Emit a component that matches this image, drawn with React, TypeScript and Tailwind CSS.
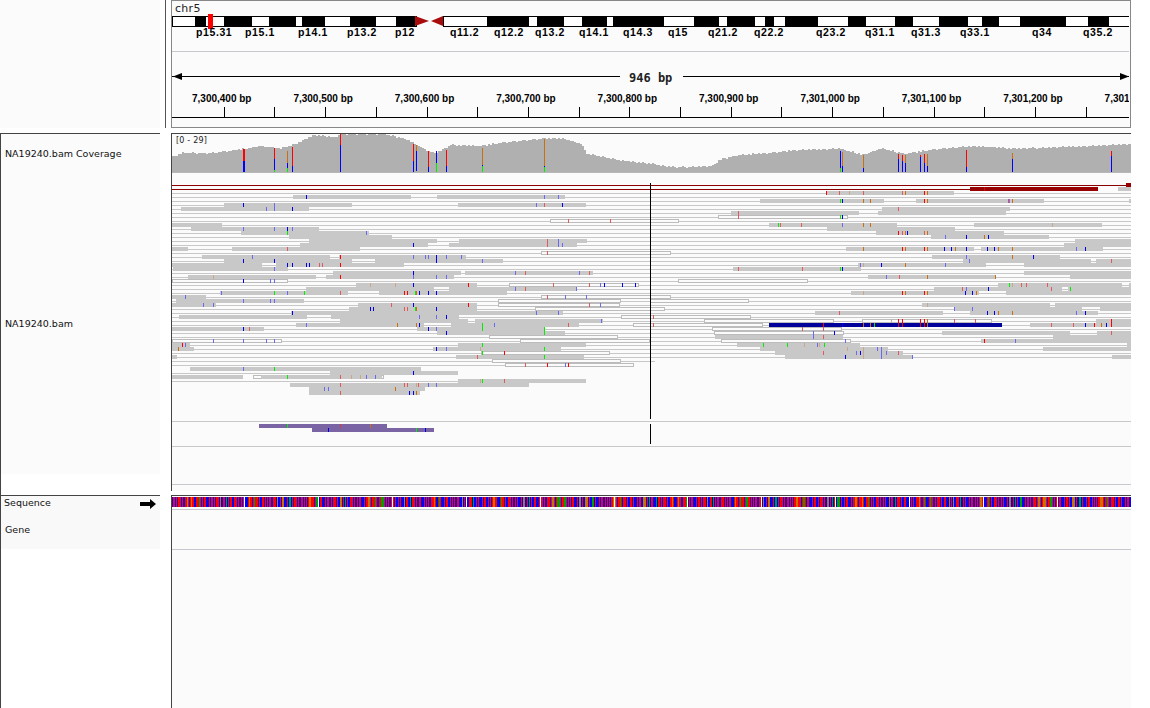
// IGV style genome browser view
type Read = [number, number[][], number[][], [number, string][]]

const markColor: Record<string, string> = {
  b: "#0000f0",
  B: "#6a6af0",
  r: "#ff0000",
  R: "#e05a5a",
  g: "#00ee00",
  o: "#c87010",
  t: "#c8a888",
}

// row, filled blocks, outlined blocks, mismatches, x values taken 3x from the left half
const leftReads: Read[] = [
  [3, [[369, 723], [801, 1185]], [], [[409, "b"], [1123, "B"], [1165, "B"]]],
  [5, [[162, 546], [864, 1248]], [], [[220, "b"], [313, "B"], [1099, "B"], [1123, "R"], [1177, "b"]]],
  [6, [[33, 417]], [], [[289, "B"], [313, "B"], [367, "b"]]],
  [9, [], [[1141, 1470]], [[1195, "R"], [1321, "R"]]],
  [10, [[5, 156]], [], []],
  [11, [[63, 447]], [], [[220, "B"], [313, "B"], [352, "b"], [367, "B"]]],
  [12, [[213, 597]], [], [[352, "g"], [589, "B"]]],
  [13, [[357, 666]], [], []],
  [14, [[417, 801], [867, 1251]], [], [[1132, "R"], [1165, "B"]]],
  [15, [[390, 774], [837, 1221]], [], [[730, "b"], [1132, "R"], [1165, "B"], [1177, "B"]]],
  [16, [[5, 54], [186, 570]], [], [[352, "R"]]],
  [17, [], [[1114, 1470]], [[1132, "R"]]],
  [18, [[96, 480], [507, 888]], [], [[247, "B"], [511, "r"], [730, "B"], [766, "B"], [775, "B"], [799, "b"], [829, "B"], [874, "B"]]],
  [19, [[162, 546], [615, 999]], [], [[220, "b"], [313, "b"], [799, "b"], [937, "B"]]],
  [20, [[5, 276], [318, 702]], [], [[352, "b"], [367, "b"], [409, "b"], [418, "b"], [448, "R"], [457, "R"], [511, "r"]]],
  [21, [[9, 354]], [], [[313, "B"]]],
  [22, [[489, 873], [885, 1269]], [], [[730, "b"], [1036, "B"], [1066, "R"], [1228, "B"], [1258, "R"]]],
  [23, [[54, 438], [468, 852]], [], [[130, "t"], [511, "r"], [730, "B"], [799, "B"], [829, "B"]]],
  [24, [], [[5, 351]], [[220, "b"], [301, "B"], [313, "B"]]],
  [25, [[558, 921]], [[1018, 1404]], [[601, "t"], [676, "t"], [730, "b"], [895, "r"], [1150, "R"], [1258, "R"], [1291, "B"], [1303, "b"], [1357, "b"], [1396, "b"]]],
  [26, [[408, 792], [837, 1221]], [], [[1036, "B"], [1066, "R"], [1219, "B"]]],
  [27, [[150, 534], [627, 1011]], [], [[154, "B"], [313, "g"], [352, "B"], [403, "g"], [511, "R"], [703, "r"], [712, "r"], [736, "g"], [739, "o"], [748, "b"], [775, "b"], [799, "b"]]],
  [28, [[5, 108]], [[1114, 1470]], [[46, "B"], [1132, "R"], [1186, "B"], [1249, "B"]]],
  [29, [[18, 402]], [[985, 1350]], [[220, "B"], [301, "B"], [313, "B"]]],
  [30, [[5, 138], [564, 921]], [[985, 1347]], [[100, "B"], [130, "B"], [664, "R"], [730, "b"], [895, "r"], [1258, "R"], [1291, "B"]]],
  [31, [[537, 921]], [[1096, 1470]], [[601, "b"], [610, "b"], [703, "R"], [712, "R"], [736, "g"], [739, "o"], [799, "b"]]],
  [32, [[363, 1179]], [], [[367, "b"], [1099, "B"], [1165, "B"]]],
  [33, [[27, 411], [483, 867]], [[1354, 1470]], [[748, "B"], [799, "B"], [829, "b"], [1450, "R"]]],
  [34, [[510, 894], [915, 1299]], [], [[1294, "B"]]],
  [35, [[378, 762], [843, 1227]], [[1390, 1470]], [[409, "B"], [682, "o"], [739, "o"], [748, "b"], [937, "g"], [973, "B"], [1195, "R"], [1450, "R"]]],
  [36, [[5, 282], [741, 1125]], [], [[220, "b"], [238, "R"], [775, "b"], [799, "B"], [937, "g"], [1123, "g"]]],
  [37, [[801, 1185]], [], [[829, "b"], [1123, "g"]]],
  [38, [], [[958, 1342]], []],
  [39, [], [[5, 333], [1051, 1436]], [[130, "B"], [220, "B"], [289, "B"], [313, "B"]]],
  [40, [[5, 60], [864, 1248]], [], [[37, "r"], [46, "B"], [937, "g"]]],
  [41, [[5, 72], [789, 1173]], [], [[25, "o"], [799, "b"], [829, "B"], [931, "t"], [1123, "g"]]],
  [42, [], [[934, 1318]], [[937, "g"], [1003, "r"]]],
  [43, [[5, 21], [858, 1242]], [], [[922, "R"], [1123, "g"]]],
  [44, [], [[967, 1351]], []],
  [45, [], [[1006, 1390]], [[1066, "R"], [1132, "r"], [1186, "B"], [1195, "r"]]],
  [46, [[60, 753]], [], [[220, "B"], [313, "g"]]],
  [47, [[480, 864]], [], [[730, "b"]]],
  [48, [[5, 219], [273, 636]], [[250, 639]], [[352, "g"], [511, "R"], [544, "t"], [571, "t"], [589, "B"], [616, "B"]]],
  [49, [[864, 1248]], [], [[931, "t"], [937, "g"], [1003, "R"]]],
  [50, [[360, 1077]], [], [[511, "R"], [703, "R"], [712, "R"], [739, "t"], [745, "R"], [775, "B"], [799, "B"]]],
  [51, [[417, 765]], [], [[463, "B"], [475, "B"], [676, "o"]]],
  [52, [[417, 750]], [], [[511, "R"], [718, "b"], [730, "b"], [739, "o"]]],
]

// same, right half
const rightReads: Read[] = [
  [2, [[530, 912]], [], [[529, "r"], [568, "R"], [598, "t"], [640, "R"], [757, "R"], [766, "o"], [823, "r"], [832, "o"]]],
  [4, [[330, 702], [798, 1182], [1437, 1443]], [], [[571, "g"], [577, "b"], [640, "o"], [661, "o"], [823, "r"], [832, "o"], [1075, "B"], [1078, "R"], [1087, "o"]]],
  [6, [[696, 1080]], [], [[745, "R"]]],
  [7, [[243, 627], [684, 1068]], [], [[265, "R"]]],
  [8, [], [[205, 590]], [[265, "R"], [571, "g"], [577, "b"]]],
  [9, [], [[0, 85]], []],
  [10, [[357, 741], [972, 1356]], [], [[385, "g"], [391, "R"], [454, "R"], [577, "B"], [640, "o"], [661, "o"], [1207, "t"]]],
  [11, [[531, 915]], [], []],
  [12, [[678, 1062]], [], [[745, "r"], [757, "R"], [766, "o"], [772, "b"], [823, "R"], [832, "o"]]],
  [13, [[843, 1197]], [], [[886, "B"], [949, "b"], [1003, "o"], [1015, "b"]]],
  [14, [[1275, 1443]], [], []],
  [15, [[1242, 1443]], [], []],
  [16, [[588, 972], [993, 1359]], [], [[640, "o"], [757, "r"], [766, "o"], [823, "r"], [832, "o"], [883, "b"], [904, "b"], [916, "o"], [949, "b"], [1012, "b"], [1033, "b"], [1045, "o"], [1087, "o"], [1279, "B"], [1306, "b"]]],
  [17, [], [[0, 59]], []],
  [18, [[846, 1230]], [], [[949, "B"], [1087, "o"], [1150, "b"]]],
  [19, [[939, 1323], [1338, 1443]], [], [[958, "B"], [1384, "R"]]],
  [20, [[624, 1008], [1122, 1443]], [], [[631, "B"], [640, "t"], [694, "b"], [766, "o"], [886, "B"]]],
  [21, [[249, 633]], [], [[265, "R"], [457, "R"], [571, "g"], [577, "b"]]],
  [22, [[1122, 1443]], [], []],
  [23, [[654, 1038], [1260, 1443]], [], [[709, "B"], [748, "R"], [832, "o"], [1036, "o"]]],
  [24, [], [[85, 470]], []],
  [25, [[1044, 1416], [1437, 1443]], [], [[1078, "g"], [1087, "t"], [1114, "R"], [1129, "R"], [1192, "R"]]],
  [26, [[852, 1236], [1254, 1443]], [], [[937, "R"], [949, "B"], [1015, "b"], [1204, "R"], [1261, "g"]]],
  [27, [[603, 987], [1068, 1443]], [], [[640, "t"], [757, "r"], [766, "o"], [823, "r"], [832, "o"], [946, "b"], [967, "b"], [979, "o"]]],
  [28, [], [[0, 59]], []],
  [29, [], [[0, 293]], []],
  [30, [[816, 1200], [1215, 1443]], [], [[832, "t"]]],
  [31, [[912, 1296], [1350, 1443]], [[0, 41]], [[913, "B"], [967, "B"]]],
  [32, [[495, 879], [960, 1344]], [], [[568, "R"], [1012, "b"], [1033, "b"], [1045, "o"], [1087, "o"], [1279, "B"], [1306, "b"]]],
  [33, [], [[8, 299]], [[10, "R"]]],
  [34, [[1338, 1443]], [[163, 548], [637, 1022]], [[724, "t"], [745, "r"], [757, "r"], [811, "r"], [823, "r"], [832, "o"], [913, "R"], [976, "R"], [1384, "r"]]],
  [35, [[1140, 1443]], [[8, 335]], [[10, "R"], [1204, "R"], [1270, "R"], [1306, "b"], [1333, "r"], [1354, "o"], [1369, "b"], [1384, "r"]]],
  [36, [], [[187, 574]], [[457, "R"], [520, "R"]]],
  [37, [[876, 1260], [1341, 1443]], [[193, 578]], [[490, "B"], [553, "b"], [1384, "R"]]],
  [38, [[195, 578], [1209, 1443]], [], [[490, "B"], [520, "R"]]],
  [39, [[993, 1377], [1209, 1443]], [[214, 599]], [[586, "B"], [1003, "r"], [1096, "B"]]],
  [40, [[261, 630], [1431, 1443]], [], [[340, "g"], [412, "g"], [463, "t"], [502, "B"], [508, "t"], [523, "g"]]],
  [41, [[330, 714], [1179, 1443]], [], [[592, "t"], [640, "t"], [682, "B"], [694, "B"]]],
  [42, [[375, 759]], [], [[520, "R"], [619, "B"], [631, "b"], [640, "t"], [694, "B"], [709, "B"], [745, "R"]]],
  [43, [[405, 789], [1386, 1443]], [], [[586, "b"], [640, "t"], [694, "B"], [787, "B"]]],
]

const navyMarks: [number, string][] = [[520, "r"], [577, "b"], [640, "o"], [661, "o"], [673, "g"], [745, "r"], [757, "r"], [811, "r"], [823, "r"], [832, "o"]]

// top of the coverage area per x, from the left and the right crop
const coverageLeft = [[465, 470], [490, 458], [560, 460], [650, 448], [700, 438], [760, 445], [800, 430], [845, 405], [900, 412], [920, 402], [1040, 402], [1100, 420], [1150, 450], [1175, 460], [1215, 435], [1300, 438], [1350, 428], [1470, 415], [1520, 415], [1568, 432]]
const coverageRight = [[45, 462], [130, 480], [210, 490], [280, 502], [385, 498], [400, 480], [450, 466], [540, 458], [610, 450], [730, 446], [790, 465], [840, 444], [900, 462], [980, 448], [1090, 438], [1180, 445], [1230, 445], [1400, 438], [1510, 432]]

const coveragePoints = [
  ...coverageLeft.map(([x, y]) => [x / 2.703, y / 3]),
  ...coverageRight.map(([x, y]) => [570 + x / 2.703, y / 3]),
]

function coverageTop(x: number) {
  for (let i = 1; i < coveragePoints.length; i++) {
    const [x1, y1] = coveragePoints[i]
    if (x <= x1) {
      const [x0, y0] = coveragePoints[i - 1]
      return y0 + ((y1 - y0) * (x - x0)) / (x1 - x0)
    }
  }
  return 144
}

const coverageSteps = Array.from({ length: 480 }, (_, i) => {
  const x = 172 + i * 2
  const wobble = ((i * 7) % 5) * 0.3 - 0.6
  return { x, y: Math.round(coverageTop(x) + wobble) }
})

const RED = "#ff0000"
const BLUE = "#0000ff"
const GREEN = "#00ee00"
const AMBER = "#c87010"

// x, then [colour, top, bottom] in crop pixels
const coverageBars: [number, [string, number, number][]][] = [
  [659 / 2.703, [[RED, 448, 483], [BLUE, 483, 516]]],
  [742 / 2.703, [[RED, 445, 478], [BLUE, 478, 510], [GREEN, 510, 516]]],
  [777 / 2.703, [[AMBER, 452, 490], [BLUE, 490, 503], [GREEN, 503, 516]]],
  [790 / 2.703, [[RED, 440, 498], [BLUE, 498, 516]]],
  [920 / 2.703, [[RED, 402, 435], [BLUE, 435, 516]]],
  [1118 / 2.703, [[RED, 432, 483], [BLUE, 483, 516]]],
  [1125 / 2.703, [[AMBER, 435, 453], [BLUE, 453, 513]]],
  [1158 / 2.703, [[RED, 452, 500], [BLUE, 500, 516]]],
  [1180 / 2.703, [[BLUE, 452, 490], [GREEN, 490, 516]]],
  [1207 / 2.703, [[RED, 450, 498], [BLUE, 498, 516]]],
  [1304 / 2.703, [[AMBER, 445, 495], [BLUE, 495, 498], [GREEN, 498, 516]]],
  [1472 / 2.703, [[AMBER, 416, 498], [BLUE, 498, 501], [GREEN, 501, 516]]],
  [570 + 731 / 2.703, [[BLUE, 452, 503], [GREEN, 503, 516]]],
  [570 + 737 / 2.703, [[AMBER, 457, 498], [BLUE, 498, 516]]],
  [570 + 793 / 2.703, [[AMBER, 465, 503], [BLUE, 503, 516]]],
  [570 + 887 / 2.703, [[RED, 462, 478], [BLUE, 478, 516]]],
  [570 + 898 / 2.703, [[RED, 465, 483], [BLUE, 483, 516]]],
  [570 + 906 / 2.703, [[AMBER, 465, 488], [BLUE, 488, 516]]],
  [570 + 947 / 2.703, [[RED, 465, 470], [BLUE, 470, 516]]],
  [570 + 958 / 2.703, [[RED, 462, 490], [BLUE, 490, 516]]],
  [570 + 966 / 2.703, [[AMBER, 462, 497], [BLUE, 497, 516]]],
  [570 + 1071 / 2.703, [[RED, 450, 500], [BLUE, 500, 516]]],
  [570 + 1195 / 2.703, [[AMBER, 460, 477], [BLUE, 477, 516]]],
  [570 + 1463 / 2.703, [[RED, 452, 467], [BLUE, 467, 516]]],
]

const blackBands = [
  [195, 206], [224, 252], [269, 296], [302, 325], [350, 376], [396, 415],
  [487, 529], [537, 564],
]
const blackBandsRight = [
  [33, 100], [116, 254], [335, 403], [425, 500], [527, 552], [580, 669], [752, 800], [879, 927], [998, 1076], [1114, 1160], [1217, 1340], [1400, 1457],
].map(([a, b]) => [570 + a / 2.703, 570 + b / 2.703])

const bandLabels: [string, number][] = [
  ["p15.31", 196], ["p15.1", 245], ["p14.1", 298], ["p13.2", 347], ["p12", 395], ["q11.2", 450], ["q12.2", 494], ["q13.2", 535], ["q14.1", 579], ["q14.3", 623], ["q15", 668], ["q21.2", 708], ["q22.2", 754], ["q23.2", 816], ["q31.1", 865], ["q31.3", 911], ["q33.1", 960], ["q34", 1032], ["q35.2", 1083],
]

const rulerLabels = ["7,300,400 bp", "7,300,500 bp", "7,300,600 bp", "7,300,700 bp", "7,300,800 bp", "7,300,900 bp", "7,301,000 bp", "7,301,100 bp", "7,301,200 bp", "7,301"]

// one base per pixel, blue and red in turn with some green and amber, breaks every ~74 px
const seqBreaks = [244, 318, 392, 466, 540, 614, 687, 761, 835, 909, 983, 1057]
const seqRuns: { x: number; w: number; c: string }[] = []
for (let x = 172, i = 1; x < 1131; i++) {
  const n = (i * 2654435761) >>> 7
  const w = Math.min([1, 2, 1, 1, 3, 1, 2, 1][n % 8], 1131 - x)
  const odd = (n >>> 6) % 16
  const c = odd === 0 ? "#00a000" : odd === 1 ? "#c87000" : i % 2 ? "#0000ff" : "#ff0000"
  seqRuns.push({ x, w, c })
  x += w
}

function ReadRows({ reads, offset }: { reads: Read[]; offset: number }) {
  return (
    <>
      {reads.map(([row, blocks, outlines, marks]) => {
        const y = 183 + row * 4
        return (
          <g key={row}>
            {outlines.map(([a, b]) => (
              <rect key={a} x={offset + a / 3 + 0.5} y={y + 0.5} width={(b - a) / 3} height={3} fill="#fbfbfb" stroke="#bcbcbc" />
            ))}
            {blocks.map(([a, b]) => (
              <rect key={a} x={offset + a / 3} y={y} width={(b - a) / 3} height={4} fill="#c8c8c8" />
            ))}
            {marks.map(([x, c]) => (
              <rect key={x} x={Math.round(offset + x / 3)} y={y} width={1} height={4} fill={markColor[c]} />
            ))}
          </g>
        )
      })}
    </>
  )
}

function ReadsTrack() {
  const lineEnds: Record<number, number> = { 44: 655, 45: 505, 46: 172, 47: 330, 48: 172, 49: 458 }
  return (
    <svg viewBox="172 174 959 317" width={959} height={317} shapeRendering="crispEdges" className="block">
      {Array.from({ length: 48 }, (_, i) => i + 2).map((row) => (
        <rect key={row} x={172} y={185 + row * 4} width={(lineEnds[row] ?? 1131) - 172} height={1} fill="#c8c8c8" />
      ))}
      <rect x={172} y={185} width={959} height={1} fill="#8b0000" />
      <rect x={172} y={189} width={798} height={1} fill="#8b0000" />
      <rect x={970} y={187} width={128} height={4} fill="#960000" />
      <rect x={984} y={187} width={1} height={4} fill="#e00000" />
      <rect x={1126} y={183} width={5} height={4} fill="#960000" />
      <rect x={1118} y={187} width={13} height={4} fill="#c8c8c8" />
      <ReadRows reads={leftReads} offset={170} />
      <ReadRows reads={rightReads} offset={650} />
      <rect x={769} y={323} width={233} height={4} fill="#00009a" />
      {navyMarks.map(([x, c]) => (
        <rect key={x} x={Math.round(650 + x / 3)} y={323} width={1} height={4} fill={markColor[c]} />
      ))}
      <rect x={650} y={183} width={1} height={236} fill="#000000" />
      <rect x={172} y={421} width={959} height={1} fill="#c8c8c8" />
      <rect x={259} y={424} width={128} height={4} fill="#7a64a4" />
      <rect x={312} y={428} width={122} height={4} fill="#7a64a4" />
      <rect x={287} y={424} width={1} height={4} fill="#00ee00" />
      <rect x={340} y={424} width={1} height={4} fill="#d04040" />
      <rect x={370} y={424} width={1} height={4} fill="#c87010" />
      <rect x={328} y={428} width={1} height={4} fill="#0000f0" />
      <rect x={416} y={428} width={1} height={4} fill="#00ee00" />
      <rect x={425} y={428} width={1} height={4} fill="#0000f0" />
      <rect x={650} y={424} width={1} height={20} fill="#000000" />
      <rect x={172} y={446} width={959} height={1} fill="#c8c8c8" />
      <rect x={172} y={484} width={959} height={1} fill="#c8c8d0" />
    </svg>
  )
}

function CoverageTrack() {
  return (
    <svg viewBox="172 134 959 40" width={959} height={40} shapeRendering="crispEdges" className="block">
      {coverageSteps.map((s) => (
        <rect key={s.x} x={s.x} y={s.y} width={2} height={172 - s.y} fill="#b0b0b0" />
      ))}
      {coverageBars.map(([x, parts], i) =>
        parts.map(([c, top, bottom]) => (
          <rect key={`${x}-${top}`} x={Math.floor(x)} y={Math.round(top / 3)} width={i === 0 ? 2 : 1} height={Math.round(bottom / 3) - Math.round(top / 3)} fill={c} />
        )),
      )}
      <rect x={172} y={172} width={959} height={1} fill="#b8b8b8" />
      <text x={176} y={143} fontSize={8} letterSpacing={0.2} fontFamily="'DejaVu Sans', sans-serif" fill="#222222">
        [0 - 29]
      </text>
    </svg>
  )
}

function HeaderTrack() {
  return (
    <svg viewBox="172 1 957 126" width={957} height={126} className="block">
      <g shapeRendering="crispEdges">
        <rect x={172} y={16} width={244} height={10} fill="#ffffff" stroke="#000000" />
        <rect x={443} y={16} width={686} height={10} fill="#ffffff" stroke="#000000" />
        {[...blackBands, ...blackBandsRight].map(([a, b]) => (
          <rect key={a} x={a} y={16} width={b - a} height={10} fill="#000000" />
        ))}
        <rect x={208} y={14} width={5} height={15} fill="#ff0000" />
        <rect x={172} y={51} width={957} height={1} fill="#c8c8d0" />
        {Array.from({ length: 18 }, (_, i) => (
          <rect key={i} x={Math.round(223.7 + i * 50.7)} y={107} width={1} height={10} fill="#000000" />
        ))}
        <rect x={172} y={117} width={957} height={1} fill="#000000" />
        <rect x={172} y={76} width={448} height={1} fill="#000000" />
        <rect x={683} y={76} width={446} height={1} fill="#000000" />
      </g>
      <polygon points="415,16 429,21 415,26" fill="#a80c0c" />
      <polygon points="443,16 431,21 443,26" fill="#a80c0c" />
      <polygon points="173,76.5 182,73 182,80" fill="#000000" />
      <polygon points="1129,76.5 1120,73 1120,80" fill="#000000" />
      <text x={175} y={12} fontSize={11} letterSpacing={0.3} fontFamily="'DejaVu Sans', sans-serif" fill="#222222">
        chr5
      </text>
      {bandLabels.map(([label, x]) => (
        <text key={label} x={x} y={36} fontSize={10.5} fontWeight="bold" fontFamily="'Liberation Sans', sans-serif" letterSpacing={0.6} fill="#000000">
          {label}
        </text>
      ))}
      <text x={629} y={82} fontSize={12} fontWeight="bold" fontFamily="'DejaVu Sans Mono', monospace" fill="#222222">
        946 bp
      </text>
      {rulerLabels.map((label, i) => (
        <text key={label} x={192 + i * 101.4} y={102} fontSize={10} fontWeight="bold" fontFamily="'Liberation Sans', sans-serif" fill="#000000">
          {label}
        </text>
      ))}
    </svg>
  )
}

function SequenceBar() {
  return (
    <svg viewBox="172 497 959 10" width={959} height={10} shapeRendering="crispEdges" className="block">
      {seqRuns.map((r) => (
        <rect key={r.x} x={r.x} y={497} width={r.w} height={10} fill={r.c} />
      ))}
      {seqBreaks.map((x) => (
        <rect key={x} x={x} y={497} width={1} height={10} fill="#ffffff" />
      ))}
    </svg>
  )
}

export default function App() {
  return (
    <div className="flex h-[708px] w-[1150px] flex-col overflow-hidden bg-white font-['DejaVu_Sans',sans-serif] text-[9.5px] text-[#111111]">
      <div className="flex h-[128px]">
        <div className="w-[160px] bg-[#fbfbfb]" />
        <div className="ml-[5px] w-px bg-[#555555]" />
        <div className="ml-[5px] w-[960px] border-x border-b border-t border-[#888888] bg-[#fbfbfb]">
          <HeaderTrack />
        </div>
      </div>

      <div className="mt-[5px] flex h-[362px]">
        <div className="flex w-[160px] flex-col border-t border-l border-t-[#444444] border-l-[#444444]">
          <div className="flex h-[40px] items-center bg-[#fbfbfb] pl-[4px]">NA19240.bam Coverage</div>
          <div className="flex h-[300px] items-center bg-[#fbfbfb] pl-[4px]">NA19240.bam</div>
        </div>
        <div className="ml-[11px] h-[358px] w-[960px] border-t border-l border-[#444444] bg-[#fbfbfb]">
          <CoverageTrack />
          <ReadsTrack />
        </div>
      </div>

      <div className="flex flex-1">
        <div className="w-[160px] border-t border-l border-[#444444]">
          <div className="h-[53px] bg-[#f9f9f9] pl-[3px]">
            <div className="flex h-[15px] items-center justify-between pr-[4px]">
              <span>Sequence</span>
              <svg width="16" height="10" viewBox="0 0 16 10" aria-hidden="true">
                <path d="M0 3h10V0l6 5-6 5V7H0z" fill="#000000" />
              </svg>
            </div>
            <div className="mt-[14px] pl-px leading-none">Gene</div>
          </div>
        </div>
        <div className="ml-[11px] w-[960px] border-l border-t border-[#444444] bg-[#fbfbfb]">
          <div className="h-px bg-white" />
          <SequenceBar />
          <div className="mt-[2px] h-[41px] border-t border-b border-t-[#c8c8d0] border-b-[#c8c8d0]" />
        </div>
      </div>
    </div>
  )
}
